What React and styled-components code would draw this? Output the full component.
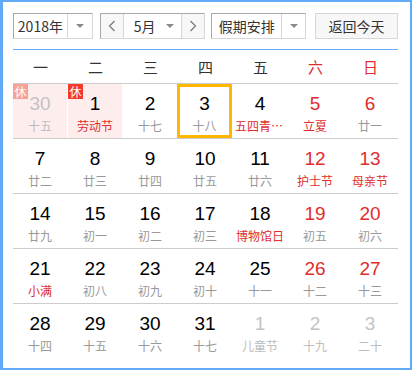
import React from 'react';
import styled, { createGlobalStyle } from 'styled-components';

const GlobalStyle = createGlobalStyle`
  body {
    margin: 0;
    background: #fff;
    font-family: "Liberation Sans", "Noto Sans CJK SC", sans-serif;
  }
`;

const Frame = styled.div`
  box-sizing: border-box;
  width: 412px;
  height: 370px;
  border: 2px solid #62aaf8;
  border-left-width: 3px;
  padding: 11px 12px 0 10px;
  background: #fff;
`;

const Toolbar = styled.div`
  display: flex;
  align-items: center;
  height: 26px;
  padding-bottom: 10px;
  border-bottom: 1px solid #6aaef5;
`;

const Select = styled.div`
  box-sizing: border-box;
  display: flex;
  height: 26px;
  width: ${p => p.$width}px;
  margin-right: ${p => p.$gap || 0}px;
  border: 1px solid;
  border-color: #a8a8a8 #d6d6d6 #d6d6d6 #a8a8a8;
  background: #fff;
  font-family: "Noto Sans CJK SC", sans-serif;
  font-size: 14px;
  color: #333;
`;

const SelectText = styled.div`
  flex: 1;
  display: flex;
  align-items: center;
  justify-content: center;
  line-height: 24px;
  white-space: nowrap;
`;

const Arrow = styled.div`
  flex: none;
  width: ${p => p.$w || 23}px;
  display: flex;
  align-items: center;
  justify-content: center;
  border-left: ${p => (p.$plain ? 'none' : '1px solid #d6d6d6')};
  &::after {
    content: '';
    border-left: 4px solid transparent;
    border-right: 4px solid transparent;
    border-top: 4px solid #8a8a8a;
  }
`;

const MonthGroup = styled.div`
  box-sizing: border-box;
  display: flex;
  height: 26px;
  width: 106px;
  margin-right: 6px;
  border: 1px solid;
  border-color: #a8a8a8 #d6d6d6 #d6d6d6 #a8a8a8;
  font-family: "Noto Sans CJK SC", sans-serif;
  font-size: 14px;
  color: #333;
`;

const StepButton = styled.div`
  flex: none;
  width: 22px;
  display: flex;
  align-items: center;
  justify-content: center;
  background: #f7f7f7;
  border-left: ${p => (p.$side === 'right' ? '1px solid #d6d6d6' : 'none')};
  border-right: ${p => (p.$side === 'left' ? '1px solid #d6d6d6' : 'none')};
`;

const MonthSelect = styled.div`
  flex: 1;
  display: flex;
  align-items: center;
  padding-left: 10px;
  white-space: nowrap;
`;

const MonthLabel = styled.span`
  flex: 1;
`;

const TodayButton = styled.div`
  box-sizing: border-box;
  width: 83px;
  height: 26px;
  margin-left: 9px;
  border: 1px solid #d6d6d6;
  background: #f7f7f7;
  display: flex;
  align-items: center;
  justify-content: center;
  font-family: "Noto Sans CJK SC", sans-serif;
  font-size: 14px;
  color: #333;
`;

const WeekHeader = styled.div`
  display: grid;
  grid-template-columns: repeat(7, 55px);
  height: 33px;
  border-bottom: 1px solid #cccccc;
`;

const WeekDay = styled.div`
  display: flex;
  align-items: center;
  justify-content: center;
  font-family: "Noto Sans CJK SC", sans-serif;
  font-size: 15px;
  color: ${p => (p.$weekend ? '#e02d2d' : '#333')};
`;

const Row = styled.div`
  display: grid;
  grid-template-columns: repeat(7, 55px);
  height: 54px;
  border-bottom: ${p => (p.$last ? 'none' : '1px solid #cccccc')};
`;

const Cell = styled.div`
  position: relative;
  box-sizing: border-box;
  margin-right: 1px;
  display: flex;
  flex-direction: column;
  align-items: center;
  padding-top: ${p => (p.$today ? 6 : 9)}px;
  background: ${p => (p.$holiday ? '#fdeeed' : '#fff')};
  border: ${p => (p.$today ? '3px solid #ffb700' : 'none')};
  margin-left: ${p => (p.$today ? -1 : 0)}px;
`;

const Num = styled.div`
  font-family: "Liberation Sans", Arial, sans-serif;
  font-size: 19px;
  line-height: 22px;
  color: ${p => (p.$other ? '#c3c3c3' : p.$red ? '#e02d2d' : '#000')};
`;

const Lunar = styled.div`
  margin-top: 3px;
  max-width: 50px;
  overflow: hidden;
  white-space: nowrap;
  text-overflow: ellipsis;
  font-family: "Noto Sans CJK SC", sans-serif;
  font-size: 12px;
  line-height: 16px;
  color: ${p => (p.$other ? '#bdbdbd' : p.$red ? '#e02d2d' : '#999')};
`;

const RestBadge = styled.span`
  position: absolute;
  left: 0;
  top: 0;
  width: 15px;
  height: 15px;
  display: flex;
  align-items: center;
  justify-content: center;
  background: ${p => (p.$faded ? '#f7a199' : '#f33a2c')};
  color: #fff;
  font-family: "Noto Sans CJK SC", sans-serif;
  font-size: 12px;
  line-height: 15px;
`;

const Chevron = ({ dir }) => (
  <svg width="8" height="12" viewBox="0 0 8 12">
    <polyline
      points={dir === 'left' ? '6.5,1 1.5,6 6.5,11' : '1.5,1 6.5,6 1.5,11'}
      fill="none"
      stroke="#777"
      strokeWidth="1.2"
    />
  </svg>
);

const weekDays = ['一', '二', '三', '四', '五', '六', '日'];

// [day, lunar, flags] o = other month, h = rest day, f = festival, t = today
const weeks = [
  [[30, '十五', 'o h'], [1, '劳动节', 'f h'], [2, '十七'], [3, '十八', 't'], [4, '五四青年节', 'f'], [5, '立夏', 'f'], [6, '廿一']],
  [[7, '廿二'], [8, '廿三'], [9, '廿四'], [10, '廿五'], [11, '廿六'], [12, '护士节', 'f'], [13, '母亲节', 'f']],
  [[14, '廿九'], [15, '初一'], [16, '初二'], [17, '初三'], [18, '博物馆日', 'f'], [19, '初五'], [20, '初六']],
  [[21, '小满', 'f'], [22, '初八'], [23, '初九'], [24, '初十'], [25, '十一'], [26, '十二'], [27, '十三']],
  [[28, '十四'], [29, '十五'], [30, '十六'], [31, '十七'], [1, '儿童节', 'o'], [2, '十九', 'o'], [3, '二十', 'o']],
];

export default function App() {
  return (
    <>
      <GlobalStyle />
      <Frame>
        <Toolbar>
          <Select $width={80} $gap={7}>
            <SelectText>2018年</SelectText>
            <Arrow $w={24} />
          </Select>
          <MonthGroup>
            <StepButton $side="left"><Chevron dir="left" /></StepButton>
            <MonthSelect>
              <MonthLabel>5月</MonthLabel>
              <Arrow $plain $w={22} />
            </MonthSelect>
            <StepButton $side="right"><Chevron dir="right" /></StepButton>
          </MonthGroup>
          <Select $width={95}>
            <SelectText>假期安排</SelectText>
            <Arrow $w={23} />
          </Select>
          <TodayButton>返回今天</TodayButton>
        </Toolbar>
        <WeekHeader>
          {weekDays.map((d, i) => (
            <WeekDay key={d} $weekend={i >= 5}>{d}</WeekDay>
          ))}
        </WeekHeader>
        {weeks.map((week, wi) => (
          <Row key={wi} $last={wi === weeks.length - 1}>
            {week.map(([day, lunar, flags = ''], di) => {
              const f = flags.split(' ');
              const other = f.includes('o');
              return (
                <Cell key={di} $holiday={f.includes('h')} $today={f.includes('t')}>
                  {f.includes('h') && <RestBadge $faded={other}>休</RestBadge>}
                  <Num $other={other} $red={di >= 5}>{day}</Num>
                  <Lunar $other={other} $red={f.includes('f')}>{lunar}</Lunar>
                </Cell>
              );
            })}
          </Row>
        ))}
      </Frame>
    </>
  );
}
